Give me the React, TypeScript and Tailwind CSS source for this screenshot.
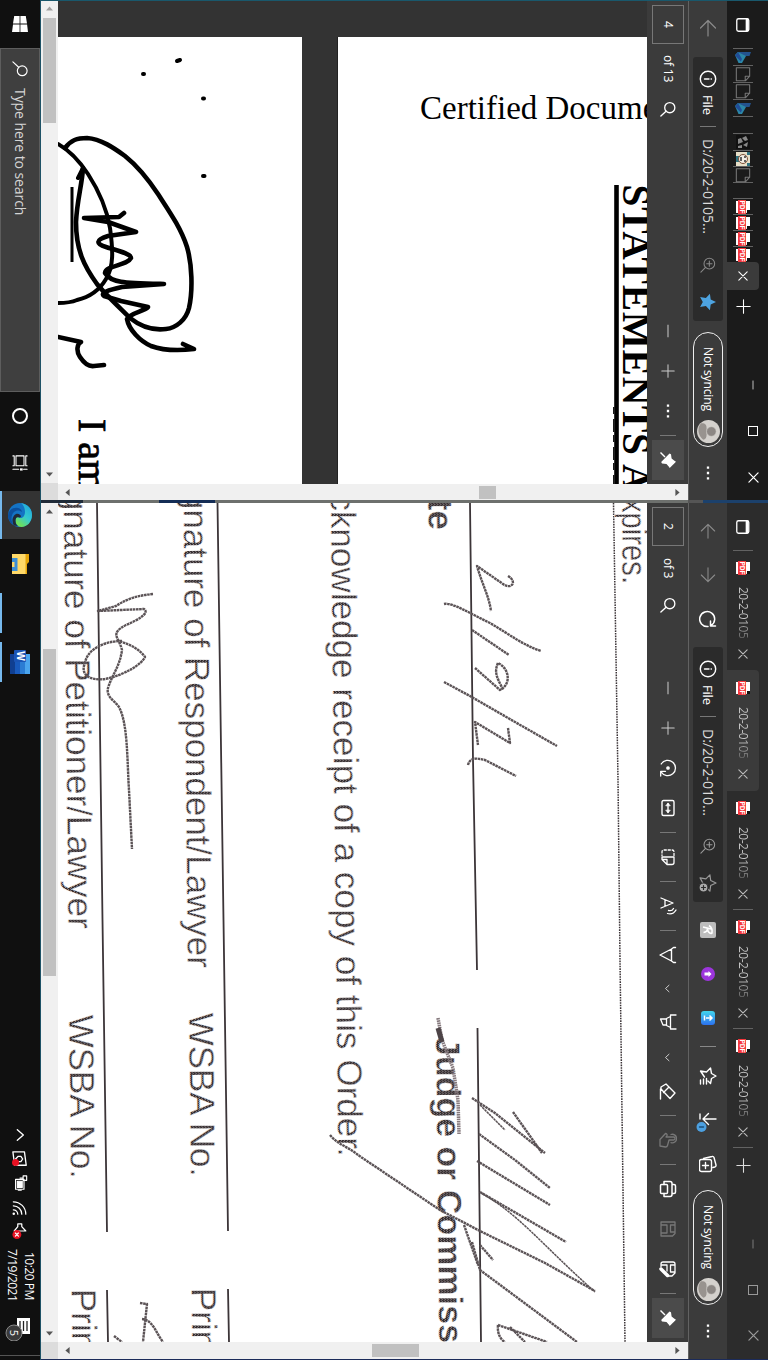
import type { ReactNode } from "react";

type IconProps = { className?: string; children: ReactNode; sw?: number };

function Icon({ className = "size-[18px]", children, sw = 1.3 }: IconProps) {
  return (
    <svg
      viewBox="0 0 18 18"
      fill="none"
      stroke="currentColor"
      strokeWidth={sw}
      strokeLinecap="round"
      strokeLinejoin="round"
      className={`${className} shrink-0 rotate-90`}
    >
      {children}
    </svg>
  );
}

function VText({ className = "", children }: { className?: string; children: ReactNode }) {
  return (
    <span className={`shrink-0 whitespace-nowrap font-['Open_Sans','Noto_Sans',sans-serif] [writing-mode:vertical-rl] ${className}`}>
      {children}
    </span>
  );
}

function TabsIcon({ className }: { className: string }) {
  return (
    <Icon className={className} sw={1.5}>
      <rect x="2" y="2.500" width="14" height="13.500" rx="2" />
      <path d="M3 4.500h12" strokeWidth="3" />
    </Icon>
  );
}

function Arrow({ className, back }: { className: string; back?: boolean }) {
  return (
    <Icon className={className} sw={1.2}>
      {back ? <path d="M17 9H1.5M9 1.5L1.5 9L9 16.500" /> : <path d="M1 9h15.500M9 1.500L16.500 9L9 16.500" />}
    </Icon>
  );
}

function SearchIcon({ className }: { className: string }) {
  return (
    <Icon className={className} sw={1.5}>
      <circle cx="7.500" cy="7" r="5.700" />
      <path d="M11.600 11.200L17 17" />
    </Icon>
  );
}

function InfoIcon() {
  return (
    <Icon className="mt-[13px] size-[18px] text-white" sw={1.4}>
      <circle cx="9" cy="9" r="7.700" />
      <path d="M9 8v4.500M9 5.600v0.300" />
    </Icon>
  );
}

function ZoomIcon({ className }: { className: string }) {
  return (
    <Icon className={className} sw={1.2}>
      <circle cx="7.500" cy="7.500" r="6" />
      <path d="M11.800 11.800L17 17M4.500 7.500h6M7.500 4.500v6" />
    </Icon>
  );
}

function Dots({ className }: { className: string }) {
  return (
    <Icon className={className}>
      <path d="M3 9h.01M9 9h.01M15 9h.01" strokeWidth="2.600" strokeLinecap="square" />
    </Icon>
  );
}

function Plus({ className }: { className: string }) {
  return (
    <Icon className={className}>
      <path d="M1 9h16M9 1v16" />
    </Icon>
  );
}

function Minus({ className }: { className: string }) {
  return (
    <Icon className={className}>
      <path d="M1 9h16" strokeLinecap="butt" />
    </Icon>
  );
}

function Cross({ className }: { className: string }) {
  return (
    <Icon className={className} sw={2}>
      <path d="M1.500 1.500l15 15M16.500 1.500l-15 15" />
    </Icon>
  );
}

function Chevron({ className }: { className: string }) {
  return (
    <Icon className={className} sw={2}>
      <path d="M2.500 6l6.500 7l6.500-7" />
    </Icon>
  );
}

function PinButton() {
  return (
    <div className="mt-1 flex h-10 w-8 shrink-0 items-center justify-center bg-[#4b4b4b]">
      <svg viewBox="0 0 18 18" className="size-[18px] rotate-90 text-white" fill="currentColor">
        <path d="M1.500 16.500L6 12" stroke="currentColor" strokeWidth="1.400" />
        <path d="M10.700 1l6.300 6.300l-1.500 1l-2.500 2.200l-.5 4.500l-1.600.8L2.500 7.500l.8-1.500l4.200-.6l2.100-2.500z" />
      </svg>
    </div>
  );
}

function PdfIcon({ className = "" }: { className?: string }) {
  return (
    <svg viewBox="0 0 14 16" className={`h-4 w-[14px] shrink-0 rotate-90 ${className}`}>
      <path d="M1 1h8.500L13 4.500V15H1z" fill="#fff" />
      <path d="M10 1h3v3h-3z" fill="#111" />
      <rect x="0" y="5" width="14" height="8" fill="#f5393d" />
      <text x="7" y="11.300" textAnchor="middle" fontSize="6.500" fontWeight="700" fill="#fff" fontFamily="Liberation Sans, sans-serif">
        PDF
      </text>
    </svg>
  );
}

function PageIcon() {
  return (
    <Icon className="size-4 text-[#777]" sw={1.2}>
      <path d="M2 1.500h9.500l5 4.500v10.500H2zM11.500 1.500v5h5" />
    </Icon>
  );
}

function BingIcon() {
  return (
    <svg viewBox="0 0 16 16" className="size-4 rotate-90">
      <path d="M3 0l4 1.500v8L3 13z" fill="#23538f" />
      <path d="M7 5l7 4v3.500L6 16l-3-2.800z" fill="#2b87a8" />
      <path d="M3 13l7-4l2.500 1.200L6.500 16z" fill="#204d97" />
    </svg>
  );
}

function PinnedTab({ children, first }: { children?: ReactNode; first?: boolean }) {
  return (
    <div className={first ? "flex h-[17px] w-5 shrink-0 items-center justify-center border-t border-[#626262]" : "flex h-4 w-5 shrink-0 items-center justify-center border-t border-[#626262]"}>
      {children}
    </div>
  );
}

function SyncPill({ className }: { className: string }) {
  return (
    <div className={`${className} flex h-[115px] w-[30px] shrink-0 flex-col items-center rounded-[15px] border border-[#eee] pt-[14px]`}>
      <VText className="h-[65px] text-[12px] leading-[28px] tracking-[-0.15px] text-white">Not syncing</VText>
      <svg viewBox="0 0 24 24" className="mt-[8px] size-[23px] rotate-90">
        <circle cx="12" cy="12" r="12" fill="#d4d1cd" />
        <path d="M3.500 17.500a5 4 0 0 1 5-3.500h7a5 4 0 0 1 5 3.500A12 12 0 0 1 3.500 20z" fill="#98938f" />
        <circle cx="12" cy="9" r="5" fill="#8c8784" stroke="#d4d1cd" strokeWidth=".6" />
      </svg>
    </div>
  );
}

function SideScroll({ small }: { small?: boolean }) {
  return (
    <div className="flex w-[17px] shrink-0 flex-col items-center bg-[#f0f0f0]">
      <svg viewBox="0 0 10 6" className={small ? "mt-[5px] h-[5px] w-[7px]" : "mt-[6px] h-[5px] w-[7px]"}>
        <path d="M0 6L5 0l5 6z" fill={small ? "#a0a0a0" : "#555"} />
      </svg>
      <div className={small ? "mt-[7px] h-[105px] w-[13px] shrink-0 bg-[#c1c1c1]" : "mt-[135px] h-[327px] w-[13px] shrink-0 bg-[#c1c1c1]"} />
      <div className="grow" />
      <svg viewBox="0 0 10 6" className="mb-[6px] h-[5px] w-[7px] shrink-0">
        <path d="M0 0l5 6l5-6z" fill="#555" />
      </svg>
      <div className="h-[17px] w-full shrink-0 bg-[#dcdcdc]" />
    </div>
  );
}

function BaseScroll({ small }: { small?: boolean }) {
  return (
    <div className="flex h-[17px] shrink-0 items-center bg-[#f0f0f0]">
      <svg viewBox="0 0 6 10" className="ml-[7px] h-[7px] w-[5px]">
        <path d="M6 0L0 5l6 5z" fill="#555" />
      </svg>
      <div className={small ? "ml-[409px] h-[13px] w-[17px] bg-[#c1c1c1]" : "ml-[302px] h-[13px] w-[47px] bg-[#c1c1c1]"} />
      <div className="grow" />
      <svg viewBox="0 0 6 10" className="mr-[8px] h-[7px] w-[5px]">
        <path d="M0 0l6 5l-6 5z" fill="#555" />
      </svg>
    </div>
  );
}

const toolSep = "mt-[15px] h-px w-4 shrink-0 bg-[#777]";
const tool = "mt-[15px] size-[18px] text-white";

function StatementScan() {
  return (
    <svg viewBox="58 1 589 483" className="h-[483px] w-[589px]">
      <rect x="58" y="1" width="589" height="483" fill="#333" />
      <rect x="58" y="37" width="244" height="447" fill="#fff" />
      <rect x="338" y="37" width="309" height="447" fill="#fff" />
      <rect x="337" y="37" width="1" height="447" fill="#222" />
      <g fill="none" stroke="#000" strokeWidth="4.600" strokeLinecap="round" strokeLinejoin="round">
        <path d="M65 148C71 140 77 138 87 138C101 139 114 148 125 156C140 168 150 182 158 194C169 211 181 228 187 247C192 264 193 290 189 308C186 320 176 328 166 329C151 331 140 326 130 318C119 307 105 294 97 284C84 266 76 250 76 222C77 200 82 185 83 168" />
        <path d="M58 144C69 150 80 162 88 174C99 191 107 210 110 228C113 250 114 266 106 279C99 291 90 297 77 300C70 303 64 303 58 303M83 168L78 178" strokeWidth="4" />
        <path d="M72 187V262" strokeWidth="3" strokeLinecap="butt" />
        <path d="M124 213L119 217L84 218L108 222L136 232L108 236C95 240 96 244 106 247C119 251 131 254 131 258C127 266 106 265 105 273C111 283 124 283 164 284L122 287C108 290 100 293 104 296L121 301L148 307C145 311 130 313 127 319C129 330 140 341 151 346C162 350 177 351 194 349L183 344" />
        <path d="M58 337L81 342C77 344 76 351 80 357C84 363 88 367 94 366L104 365" />
        <path d="M177 61L180 60M143 74h1M203 98.500h1M203 176h1.500" strokeWidth="4" />
      </g>
      <g fontFamily="Liberation Serif, serif" fill="#000">
        <text transform="translate(79 419) rotate(90)" fontSize="40" stroke="#000" strokeWidth=".8">
          I am
        </text>
        <text x="420" y="119" fontSize="33">
          Certified Document
        </text>
        <text transform="translate(622.500 184.500) rotate(90)" fontSize="39.400" fontWeight="700" textLength="308">
          STATEMENTS A
        </text>
      </g>
      <path d="M616.500 185V484" stroke="#000" strokeWidth="4.600" />
      <path d="M613.700 407V484" stroke="#000" strokeWidth="1.200" strokeDasharray="7 5 13 3" />
    </svg>
  );
}

function OrderScan() {
  return (
    <svg viewBox="58 503 589 839" className="h-[839px] w-[589px]">
      <defs>
        <pattern id="scanInk" width="2" height="3" patternUnits="userSpaceOnUse">
          <rect width="2" height="3" fill="#322c2e" />
          <rect y="2" width="1" height="1" fill="#978d90" />
          <rect x="1" y="0" width="1" height="1" fill="#7d7376" />
        </pattern>
      </defs>
      <rect x="58" y="503" width="589" height="839" fill="#fff" />
      <g stroke="#3c3538" fill="none" strokeWidth="1.800">
        <path d="M97 503L102.500 920L107 1232M107 1290L108 1342" />
        <path d="M217.500 503L223.500 920L228 1231M228 1289L229 1342" />
        <path d="M470 503L473 760L477 970M477.500 1028L481 1342" />
        <path d="M613.500 503L618 780L620 960L625 1342" strokeWidth="1.500" strokeDasharray="1.600 1" />
      </g>
      <g fontFamily="Liberation Sans, sans-serif" fill="url(#scanInk)" stroke="#fff" strokeWidth=".4" fontSize="35">
        <text transform="translate(63.500 491) rotate(89.350)" textLength="438">gnature of Petitioner/Lawyer</text>
        <text transform="translate(183.500 490) rotate(89.500)" textLength="478">gnature of Respondent/Lawyer</text>
        <text transform="translate(69 1015) rotate(89.350)" textLength="164">WSBA No.</text>
        <text transform="translate(189 1013) rotate(89.350)" textLength="164">WSBA No.</text>
        <text transform="translate(71.500 1289) rotate(89.350)">Print</text>
        <text transform="translate(191.500 1288) rotate(89.350)">Print</text>
        <text transform="translate(330.500 474) rotate(89.350)" textLength="683">acknowledge receipt of a copy of this Order.</text>
        <text transform="translate(428 454) rotate(89.600)" fontWeight="700">Date</text>
        <text transform="translate(436 1037) rotate(89.400)" fontWeight="700" fontSize="34">Judge or Commissioner</text>
        <text transform="translate(622 498) rotate(89.700)" textLength="86" lengthAdjust="spacingAndGlyphs">xpires.</text>
      </g>
      <g fill="none" stroke="#5b5356" strokeWidth="2.400" strokeLinejoin="round" strokeDasharray="2.600 .6">
        <path d="M153 594C132 596 124 601 116 606L98 611L144 609C150 613 138 620 126 625C109 634 119 637 122 650C120 666 112 675 108 688C106 697 114 700 119 707C128 724 127 760 129 790L132 849" />
        <path d="M122 641C103 641 87 650 85 663C80 674 89 681 105 679C125 675 142 664 145 657C140 650 132 645 119 641" />
        <path d="M508 576C518 582 511 590 503 584L477 566C482 584 489 596 491 611" />
        <path d="M444 604C452 602 471 614 490 623C512 636 523 645 541 651" />
        <path d="M472 630L509 655M475 668L500 690C512 684 509 668 498 663C493 674 499 680 503 690" />
        <path d="M444 682L470 696L515 722L557 746M508 728L510 743L475 722L478 745M468 765C470 757 477 758 485 760L516 776" />
        <path d="M330 1135C338 1145 349 1147 358 1155L440 1210L480 1231L545 1263L595 1291" />
        <path d="M472 1098L495 1113L545 1153M513 1112L542 1153M479 1134L515 1160L550 1188M477 1161L550 1205M480 1192L566 1242" />
        <path d="M480 1105L505 1130M481 1193C520 1215 540 1243 595 1292" strokeWidth="1.500" />
        <path d="M472 1242L480 1270L577 1342M480 1245L493 1260M464 1225L478 1265M498 1325L547 1342M498 1325C497 1334 501 1340 505 1342M510 1327L525 1342" />
        <path d="M140 1303L147 1304L143 1342M142 1319C153 1320 156 1333 163 1342M114 1336L122 1342" />
      </g>
      <path d="M438 1018L442 1040L453 1068L458 1100L459 1134" fill="none" stroke="#85797d" strokeWidth="3.500" strokeDasharray="1.600 .7" />
      <path d="M438 1028L442 1042" fill="none" stroke="#4d4447" strokeWidth="5" />
    </svg>
  );
}

function Tab({ className }: { className: string }) {
  return (
    <div className={`${className} flex shrink-0 flex-col items-center`}>
      <PdfIcon className="my-[-1px]" />
      <VText className="mt-3 h-[51px] bg-gradient-to-b from-[#c9c9c9] from-60% to-[#6b6b6b] bg-clip-text text-[12px] leading-[18px] tracking-[-0.5px] text-transparent">
        20-2-0105
      </VText>
      <Cross className="mt-[11px] size-[10px] text-[#bbb]" />
    </div>
  );
}

function Taskbar() {
  return (
    <div className="flex w-10 shrink-0 flex-col items-center bg-[#101010]">
      <svg viewBox="0 0 16 16" className="mt-4 size-4 shrink-0 rotate-90" fill="#fff">
        <path d="M0 2.200L7.600 1v6.600H0zM8.400 .9L16 0v7.600H8.400zM0 8.400h7.600V15L0 13.800zM8.400 8.400H16V16l-7.600-1z" />
      </svg>
      <div className="mt-4 flex h-[344px] w-full shrink-0 flex-col items-center border border-[#5d5d5d] bg-[#3f3f3f] pt-3">
        <Icon className="size-4 text-white" sw={1.300}>
          <circle cx="11" cy="6.500" r="5.500" />
          <path d="M7 10.500L1 17" />
        </Icon>
        <VText className="mt-[11px] text-[14px] leading-[36px] tracking-[-0.08px] text-[#d5d5d5]">Type here to search</VText>
      </div>
      <div className="mt-4 size-4 shrink-0 rounded-full border-2 border-white" />
      <Icon className="mt-[31px] size-4 text-white" sw={1.200}>
        <path d="M1 4.500h11v9H1zM1 1v1.500h11V1M1 17v-1.500h11V17M16 1v4M16 10.500V17" />
        <rect x="15" y="6" width="2.500" height="3" fill="currentColor" stroke="none" />
      </Icon>
      <div className="mt-5 flex h-12 w-full shrink-0 items-center justify-center border-l-2 border-[#76b9ed] bg-[#333] pr-[2px]">
        <svg viewBox="0 0 24 24" className="size-6 rotate-90">
          <defs>
            <linearGradient id="edgeSea" x1="0" y1="0" x2="1" y2=".6">
              <stop offset="0" stopColor="#1c9fe0" />
              <stop offset=".6" stopColor="#35c9cf" />
              <stop offset="1" stopColor="#6ee05a" />
            </linearGradient>
          </defs>
          <circle cx="12" cy="12" r="12" fill="#1473c4" />
          <path d="M0 11C1 4 6 0 12 0c7 0 12 5 12 10.500c0 4-3 6-6.500 6c-3 0-4.500-1.200-3.500-2.500c3-4-1-7-5-7c-4 0-7 1.500-9 4z" fill="url(#edgeSea)" />
          <path d="M9 10c-3 3-2 10 6 10.500c3 .2 5-.8 7-2C20 22 16 24 12 24C6 23 4 18 5 14c.6-2.500 2-3.500 4-4z" fill="#0c4f9c" />
          <path d="M14.500 13c-1 1.500 0 3.500 3 3.500c2.500 0 4.500-.8 5.500-2.500l-.5 4c-3 2-9 2.500-11.500-2c-1-2.500 1-5 2.500-5c1 .5 1.200 1.200 1 2z" fill="#202a38" />
        </svg>
      </div>
      <div className="flex h-[50px] shrink-0 items-center">
        <svg viewBox="0 0 20 18" className="h-[18px] w-5 rotate-90">
          <path d="M0 0h8l2 2h10v15H0z" fill="#e5a50a" />
          <path d="M0 3.500h20V17H0z" fill="#ffd968" />
          <path d="M4 17v-5.500h13V17h-4v-2.500H8V17z" fill="#3c8fd5" />
        </svg>
      </div>
      <div className="mt-1 h-10 w-full shrink-0 border-l-2 border-[#76b9ed]" />
      <div className="mt-[9px] flex h-10 w-full shrink-0 items-center justify-center border-l-2 border-[#76b9ed] pr-[2px]">
        <svg viewBox="0 0 24 22" className="h-[22px] w-6 rotate-90">
          <path d="M4 1h20v5.500H4z" fill="#4aa5ee" />
          <path d="M4 6h20v5.500H4z" fill="#2b7cd3" />
          <path d="M4 11h20v5.500H4z" fill="#185abd" />
          <path d="M4 16h20v5H4z" fill="#103f91" />
          <rect x="0" y="5" width="12" height="12" rx="1" fill="#1a54b5" />
          <text x="6" y="14.500" textAnchor="middle" fontSize="10" fontWeight="700" fill="#fff" fontFamily="Liberation Sans, sans-serif">
            W
          </text>
        </svg>
      </div>
      <Icon className="mt-[447px] size-3 text-white" sw={2}>
        <path d="M1 13l8-9l8 9" />
      </Icon>
      <Icon className="mt-[10px] size-4 text-white" sw={1.500}>
        <path d="M1 4l15-2v13L1 17zM6 8l3-2l3 2M12 12l-3 2l-3-3M6 8v3M12 12V9" />
        <circle cx="13" cy="14" r="4" fill="#e81123" stroke="none" />
      </Icon>
      <Icon className="mt-2 size-4 text-white" sw={1.300}>
        <rect x="5" y="4.500" width="11" height="9.500" />
        <rect x="7" y="6.500" width="7" height="5.500" fill="currentColor" />
        <path d="M17 7.500v3.500M1 1.500h5v4H1zM3.500 5.500V9" />
      </Icon>
      <Icon className="mt-[9px] size-4 text-white" sw={1.400}>
        <path d="M16 2.500A14 14 0 0 0 2 16.500M16 7A9.500 9.500 0 0 0 6.500 16.500M16 11.500A5 5 0 0 0 11 16.500" />
        <circle cx="15.500" cy="16" r="1.400" fill="currentColor" stroke="none" />
      </Icon>
      <Icon className="mt-[7px] size-4 text-white" sw={1.400}>
        <path d="M1 7h3l5-4.500v13L4 11.500H1z" />
        <circle cx="13" cy="12.500" r="5" fill="#e81123" stroke="none" />
        <path d="M11.300 10.800l3.400 3.400M14.700 10.800l-3.400 3.400" />
      </Icon>
      <div className="mt-3 flex h-[49px] shrink-0 items-center">
        <VText className="ml-[2px] w-[34px] text-center text-[12px] leading-[17px] tracking-[-0.5px] text-white">
          10:20 PM
          <br />
          7/19/2021
        </VText>
      </div>
      <svg viewBox="0 0 28 32" className="mt-[11px] h-8 w-7 shrink-0 rotate-90 self-center">
        <path d="M5 6h16v13h-6l-3 3v-3H5z" fill="#fff" />
        <path d="M8 9h10M8 12.500h10M8 16h7" stroke="#222" strokeWidth="1.300" />
        <circle cx="20" cy="22" r="8" fill="#3b3b3b" stroke="#888" />
        <text x="20" y="26" textAnchor="middle" fontSize="11" fill="#fff" fontFamily="Open Sans, sans-serif">
          5
        </text>
      </svg>
      <div className="mt-[12px] h-px w-full shrink-0 bg-[#555]" />
    </div>
  );
}

function TopWindow() {
  return (
    <div className="flex h-[500px] shrink-0 overflow-hidden border-t border-[#19586c]">
      <SideScroll small />
      <div className="flex w-[630px] shrink-0 flex-col">
        <div className="flex h-[483px] shrink-0">
          <StatementScan />
          <div className="flex w-[41px] flex-col items-center bg-[#3b3b3b]">
            <div className="mt-1 flex h-[39px] w-8 shrink-0 items-center justify-center border border-[#777]">
              <VText className="text-[12px] leading-[16px] text-white">4</VText>
            </div>
            <VText className="mt-[11px] h-[26px] text-[12px] leading-[20px] tracking-[-0.2px] text-white">of 13</VText>
            <SearchIcon className="mt-5 size-4 text-white" />
            <Minus className="mt-[207px] size-[14px] text-[#ccc]" />
            <Plus className="mt-[26px] size-[14px] text-[#ccc]" />
            <Dots className="mt-[25px] size-4 text-white" />
            <div className="mt-4 h-px w-4 shrink-0 bg-[#777]" />
            <PinButton />
          </div>
        </div>
        <BaseScroll small />
      </div>
      <div className="flex w-[39px] shrink-0 flex-col items-center border-l border-[#626262] bg-[#3b3b3b]">
        <Arrow back className="mt-[18px] size-[18px] text-[#8b8b8b]" />
        <div className="mt-5 flex h-[264px] w-[30px] shrink-0 flex-col items-center rounded-[3px] bg-[#2b2b2b]">
          <InfoIcon />
          <VText className="mt-[7px] h-5 text-[13px] leading-[20px] tracking-[-0.2px] text-white">File</VText>
          <div className="mt-[11px] h-px w-4 shrink-0 bg-[#777]" />
          <VText className="mt-3 h-24 text-[14px] leading-[22px] text-[#ddd]">D:/20-2-0105...</VText>
          <ZoomIcon className="mt-[22px] size-4 text-[#888]" />
          <svg viewBox="0 0 18 18" className="mt-5 size-[18px] rotate-90" fill="#4da3e0">
            <path d="M9 1l2.500 5.300l5.700.8l-4.100 4l1 5.800L9 14.200l-5.100 2.700l1-5.800l-4.100-4l5.700-.8z" />
          </svg>
        </div>
        <SyncPill className="mt-[11px]" />
        <Dots className="mt-[18px] size-4 text-white" />
      </div>
      <div className="flex w-[41px] shrink-0 flex-col items-center bg-[#1b1b1b] pr-[9px]">
        <TabsIcon className="mt-4 size-4 text-white" />
        <div className="mt-[15px] flex flex-col">
          <PinnedTab first><BingIcon /></PinnedTab>
          <PinnedTab first><PageIcon /></PinnedTab>
          <PinnedTab first><PageIcon /></PinnedTab>
          <PinnedTab first><BingIcon /></PinnedTab>
          <PinnedTab first />
          <PinnedTab first>
            <svg viewBox="0 0 14 14" className="size-[14px] rotate-90">
              <rect width="14" height="14" fill="#111" />
              <path d="M1 4l4-2l1 3L3 8zM7 2l5 1l-2 4zM3 9l4-2l2 5H4zM10 8h3v4h-2z" fill="#888" />
            </svg>
          </PinnedTab>
          <PinnedTab>
            <svg viewBox="0 0 14 14" className="size-[14px] rotate-90">
              <rect width="14" height="14" fill="#e7dfc8" />
              <path d="M0 0h3v3H0zM11 0h3v3h-3zM4 11h6v3H4z" fill="#31727f" />
              <circle cx="7" cy="7" r="4.500" fill="#f3eee4" stroke="#7b5038" />
              <path d="M4 5h2M8 5h2M5 9h4" stroke="#333" strokeWidth="1.500" />
            </svg>
          </PinnedTab>
          <PinnedTab><PageIcon /></PinnedTab>
          <div className="h-4 w-5 border-t border-[#626262]" />
          <PinnedTab><PdfIcon /></PinnedTab>
          <PinnedTab><PdfIcon /></PinnedTab>
          <PinnedTab><PdfIcon /></PinnedTab>
          <PinnedTab><PdfIcon /></PinnedTab>
        </div>
        <div className="flex h-7 w-8 shrink-0 items-center justify-center rounded-r-[4px] bg-[#3b3b3b]">
          <Cross className="size-[10px] text-white" />
        </div>
        <Plus className="mt-[9px] size-[15px] text-white" />
        <Minus className="ml-5 mt-[66px] size-[10px] text-white" />
        <div className="ml-5 mt-9 size-[10px] shrink-0 border border-white" />
        <Cross className="ml-5 mt-[36px] size-[11px] text-white" />
      </div>
    </div>
  );
}

function BottomWindow() {
  return (
    <div className="flex grow overflow-hidden border-b border-[#1b2b5a]">
      <SideScroll />
      <div className="flex w-[630px] shrink-0 flex-col">
        <div className="flex h-[839px] shrink-0">
          <OrderScan />
          <div className="flex w-[41px] flex-col items-center bg-[#3b3b3b]">
            <div className="mt-1 flex h-[39px] w-8 shrink-0 items-center justify-center border border-[#777]">
              <VText className="text-[12px] leading-[16px] text-white">2</VText>
            </div>
            <VText className="mt-3 h-[19px] text-[12px] leading-[20px] tracking-[-0.3px] text-white">of 3</VText>
            <SearchIcon className="mt-5 size-4 text-white" />
            <Minus className="mt-[68px] size-[14px] text-[#ccc]" />
            <Plus className="mt-[26px] size-[14px] text-[#ccc]" />
            <Icon className="mt-6 size-[18px] text-white" sw={1.300}>
              <path d="M5 15.800A7.700 7.700 0 1 1 13 15.800M12.300 11.500v4.800h4.700" />
              <circle cx="9" cy="9" r="1.200" fill="currentColor" />
            </Icon>
            <Icon className="mt-[22px] size-[18px] text-white" sw={1.400}>
              <rect x="1.500" y="3" width="15" height="12" rx="1.500" />
              <path d="M4.500 9h9" />
              <path d="M6.500 7L4.300 9l2.200 2zM11.500 7l2.200 2l-2.200 2z" fill="currentColor" strokeWidth=".8" />
            </Icon>
            <div className="mt-[15px] h-px w-4 shrink-0 bg-[#777]" />
            <Icon className={tool} sw={1.300}>
              <path d="M7.500 3H4q-2 0-2 2v8q0 2 2 2h3.500" strokeDasharray="2.200 1.800" />
              <path d="M9 3h5.500q2 0 2 2v5l-5 5H9zM16.500 10h-5v5" />
            </Icon>
            <div className={toolSep} />
            <Icon className={tool} sw={1.300}>
              <path d="M1 16L6 4l5 12M2.800 12h6.400M11.500 3.500c2 1 2.500 3 2 5M13 1c3.500 2 4.500 5 3.500 8.500" />
            </Icon>
            <div className={toolSep} />
            <Icon className={tool} sw={1.400}>
              <path d="M1.500 1.500v2l1.500 2L9 17l6-11.500l1.500-2v-2M3 5.500h12" />
            </Icon>
            <Chevron className="mt-5 size-[9px] text-[#ccc]" />
            <Icon className="mt-5 size-[18px] text-white" sw={1.300}>
              <path d="M2 1v5.500h14V1M3.500 6.500l2 4h7l2-4M6 10.500v6l6-2.500v-3.500" />
            </Icon>
            <Chevron className="mt-[22px] size-[9px] text-[#ccc]" />
            <Icon className="mt-5 size-[18px] text-white" sw={1.400}>
              <path d="M2 11L11 2l5.500 5L7 16H5zM5 8l5.500 5.500M7 16.500h10" />
            </Icon>
            <div className={toolSep} />
            <Icon className="mt-[15px] size-[18px] text-[#777]" sw={1.300}>
              <path d="M6 11V3.500a1.500 1.500 0 0 1 3 0V8l5.500 1.500a2 2 0 0 1 1.500 2l-1 5.500H8.500L2.500 11.500a1.500 1.500 0 0 1 2-1.500l1.500 1M3.500 6a4.300 4.300 0 1 1 8.200 0" />
            </Icon>
            <div className={toolSep} />
            <Icon className={tool} sw={1.500}>
              <path d="M4.500 5V3q0-1.500 1.500-1.500h6q1.500 0 1.500 1.500v2M4.500 13H1.500V7q0-2 2-2h11q2 0 2 2v6h-3" />
              <rect x="4.500" y="9.500" width="9" height="7" rx="1" />
            </Icon>
            <Icon className="mt-[22px] size-[18px] text-[#777]" sw={1.300}>
              <path d="M2 2h11.500l2.500 2.500V16H2zM5 2v4.500h7V2M5 16v-6h8v6" />
            </Icon>
            <Icon className="mt-[22px] size-[18px] text-white" sw={1.300}>
              <path d="M7 16H4q-2 0-2-2V4q0-2 2-2h9l3 3v4M5 2v4.500h7V2M5 15v-5h6" />
              <path d="M9 16l6.500-6.500" strokeWidth="3.500" />
            </Icon>
            <div className={toolSep} />
            <PinButton />
          </div>
        </div>
        <BaseScroll />
      </div>
      <div className="flex w-[39px] shrink-0 flex-col items-center border-l border-[#626262] bg-[#3b3b3b]">
        <Arrow back className="mt-5 size-4 text-[#8b8b8b]" />
        <Arrow className="mt-[28px] size-4 text-[#8b8b8b]" />
        <Icon className="mt-[27px] size-[18px] text-white" sw={1.500}>
          <path d="M15.500 6A7.500 7.500 0 1 0 16.500 9M16 1.500v5h-5" />
        </Icon>
        <div className="mt-[19px] flex h-[255px] w-[30px] shrink-0 flex-col items-center rounded-[3px] bg-[#2b2b2b]">
          <InfoIcon />
          <VText className="mt-[7px] h-5 text-[13px] leading-[20px] tracking-[-0.2px] text-white">File</VText>
          <div className="mt-[11px] h-px w-4 shrink-0 bg-[#777]" />
          <VText className="mt-3 h-[87px] text-[14px] leading-[22px] text-[#ddd]">D:/20-2-010...</VText>
          <ZoomIcon className="mt-[22px] size-4 text-[#999]" />
          <Icon className="mt-5 size-[18px] text-[#999]" sw={1.200}>
            <path d="M9 1l2.500 5.300l5.700.8l-4.100 4l1 5.800L9 14.200l-5.100 2.700l1-5.800l-4.100-4l5.700-.8z" />
            <circle cx="13.500" cy="13.500" r="4.500" fill="#aaa" stroke="#2b2b2b" />
            <path d="M11.500 13.500h4M13.500 11.500v4" stroke="#2b2b2b" />
          </Icon>
        </div>
        <svg viewBox="0 0 16 16" className="mt-5 size-4 shrink-0 rotate-90">
          <rect width="16" height="16" rx="2" fill="#bdbdbd" />
          <path d="M3.500 7C5 4.500 8 3.500 11 4c1.500 2.500-2 4.500-4.500 4.500c2 0 3.500 1 4 4M7 5L5 13" fill="none" stroke="#fff" strokeWidth="1.600" />
        </svg>
        <svg viewBox="0 0 14 14" className="mt-[29px] size-[14px] shrink-0 rotate-90">
          <circle cx="7" cy="7" r="7" fill="#9c35dc" />
          <path d="M5.500 10.500v-4h-1.500L7 3.500l3 3H8.500v4z" fill="#fff" />
        </svg>
        <svg viewBox="0 0 14 14" className="mt-[30px] size-[14px] shrink-0 rotate-90">
          <defs>
            <linearGradient id="extBlue">
              <stop stopColor="#42d6ee" />
              <stop offset="1" stopColor="#2c71ef" />
            </linearGradient>
          </defs>
          <rect width="14" height="14" rx="3" fill="url(#extBlue)" />
          <path d="M7 3v6M4.500 5.500L7 3l2.500 2.500M4.500 10.500h5" fill="none" stroke="#fff" strokeWidth="1.500" />
        </svg>
        <div className="mt-[21px] h-px w-4 shrink-0 bg-[#888]" />
        <Icon className="mt-5 size-[18px] text-white" sw={1.400}>
          <path d="M10 12.500L4 16.500l1-6L1 6.500l5.500-1L9 1l2.500 4.500l5 1L14 9M11.500 10.500h5.500M12 13.500h5M13 16.500h4" />
        </Icon>
        <Icon className="mt-[26px] size-[18px] overflow-visible text-white" sw={1.400}>
          <path d="M8 1v13M2.500 8.500L8 14l5.500-5.500M3 17h5" />
          <circle cx="16" cy="15.500" r="5" fill="#4ca0e0" stroke="none" />
          <path d="M16 13.500v4" stroke="#1b4d78" />
        </Icon>
        <Icon className="mt-[26px] size-[18px] text-white" sw={1.400}>
          <rect x="4.500" y="5.500" width="12" height="12" rx="2" />
          <path d="M10.500 8.500v6M7.500 11.500h6M3.500 13.500L1.500 5q-.4-1.500 1-2L10 1q1.500-.3 2 1.200l.5 2" />
        </Icon>
        <SyncPill className="mt-[17px]" />
        <Dots className="mt-[18px] size-4 text-white" />
      </div>
      <div className="flex w-[41px] shrink-0 flex-col items-center bg-[#2c2c2c] pr-[9px]">
        <TabsIcon className="mt-4 size-4 text-white" />
        <div className="mt-[15px] h-px w-5 shrink-0 bg-[#626262]" />
        <Tab className="h-[119px] w-8 pt-[10px]" />
        <Tab className="h-[121px] w-8 rounded-r-[4px] bg-[#3b3b3b] pt-[11px]" />
        <Tab className="h-[118px] w-8 pt-[10px]" />
        <div className="h-px w-5 shrink-0 bg-[#626262]" />
        <Tab className="h-[118px] w-8 pt-[10px]" />
        <div className="h-px w-5 shrink-0 bg-[#626262]" />
        <Tab className="h-[118px] w-8 pt-[10px]" />
        <div className="h-px w-5 shrink-0 bg-[#626262]" />
        <Plus className="mt-[10px] size-[15px] text-[#ddd]" />
        <Minus className="ml-5 mt-[66px] size-[10px] text-[#999]" />
        <div className="ml-5 mt-9 size-[10px] shrink-0 border border-[#999]" />
        <Cross className="ml-5 mt-[35px] size-[11px] text-[#999]" />
      </div>
    </div>
  );
}

export default function App() {
  return (
    <div className="flex h-[1360px] w-[768px] overflow-hidden bg-[#101010]">
      <Taskbar />
      <div className="flex w-[728px] shrink-0 flex-col border-l border-[#1e5266]">
        <TopWindow />
        <div className="flex h-[3px] shrink-0 bg-[#6d706d]">
          <div className="w-[42px] bg-[#202b38]" />
          <div className="ml-[76px] w-[57px] bg-[#142d55]" />
          <div className="ml-[473px] w-[15px] bg-[#555]" />
          <div className="w-[65px] bg-[#1c416c]" />
        </div>
        <BottomWindow />
      </div>
    </div>
  );
}
